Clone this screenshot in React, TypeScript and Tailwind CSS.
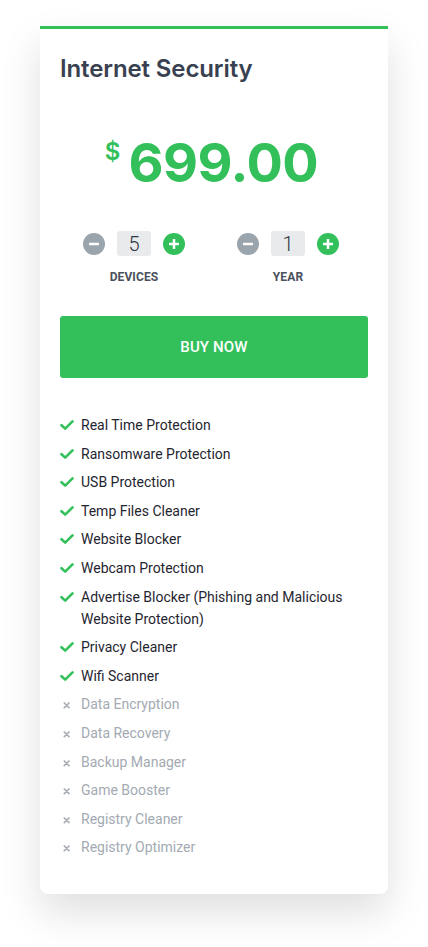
import { useState } from 'react';

const GREEN = 'bg-[#33c05b]';

const included = [
  'Real Time Protection',
  'Ransomware Protection',
  'USB Protection',
  'Temp Files Cleaner',
  'Website Blocker',
  'Webcam Protection',
  'Advertise Blocker (Phishing and Malicious Website Protection)',
  'Privacy Cleaner',
  'Wifi Scanner',
];

const excluded = [
  'Data Encryption',
  'Data Recovery',
  'Backup Manager',
  'Game Booster',
  'Registry Cleaner',
  'Registry Optimizer',
];

const CircleBtn = ({ kind, onClick }: { kind: 'minus' | 'plus'; onClick: () => void }) => (
  <button
    onClick={onClick}
    className={`w-[22px] h-[22px] rounded-full grid place-items-center ${kind === 'plus' ? GREEN : 'bg-[#9aa4ad]'}`}
  >
    <svg width="14" height="14" viewBox="0 0 14 14">
      <rect x="2" y="5.75" width="10" height="2.5" rx="0.5" fill="white" />
      {kind === 'plus' && <rect x="5.75" y="2" width="2.5" height="10" rx="0.5" fill="white" />}
    </svg>
  </button>
);

const Stepper = ({ label, value, setValue }: { label: string; value: number; setValue: (n: number) => void }) => (
  <div className="flex flex-col items-center">
    <div className="flex items-center gap-3">
      <CircleBtn kind="minus" onClick={() => setValue(Math.max(1, value - 1))} />
      <div className="w-[34px] h-[25px] rounded-[3px] bg-[#e9eaec] flex items-center justify-center text-[20px] font-light text-[#2f3540] font-['Roboto',sans-serif]">
        {value}
      </div>
      <CircleBtn kind="plus" onClick={() => setValue(value + 1)} />
    </div>
    <div className="mt-[12px] text-[12px] font-bold text-[#4a515c] tracking-[0.01em]">{label}</div>
  </div>
);

const Check = () => (
  <svg width="14" height="14" viewBox="0 0 14 14" className="shrink-0 mt-[4px]">
    <path d="M1.5 7.2 L5.2 10.6 L12.5 3.4" fill="none" stroke="#33c05b" strokeWidth="2.6" strokeLinecap="round" strokeLinejoin="round" />
  </svg>
);

const Cross = () => (
  <svg width="14" height="14" viewBox="0 0 14 14" className="shrink-0 mt-[5px]">
    <path d="M4.3 5 L9 9.7 M9 5 L4.3 9.7" stroke="#a7adb3" strokeWidth="1.7" strokeLinecap="round" />
  </svg>
);

export default function App() {
  const [devices, setDevices] = useState(5);
  const [years, setYears] = useState(1);

  return (
    <div className="min-h-screen bg-white pt-[26px] px-[40px] font-['Roboto',sans-serif]">
      <div className="w-[348px] bg-white border-t-[3px] border-[#33c05b] rounded-b-[8px] shadow-[0_18px_40px_rgba(0,0,0,0.13)] px-[20px] pt-[24px] pb-[36px]">
        <h2 className="font-['Inter',sans-serif] text-[24px] leading-[32px] font-semibold text-[#394150] tracking-[-0.005em]">
          Internet Security
        </h2>

        <div className="mt-[50px] pr-[5px] flex justify-center items-start text-[#33c05b] font-['Inter',sans-serif] font-bold">
          <span className="text-[24px] leading-none mt-[5px] mr-[8px] font-semibold">$</span>
          <span className="text-[54px] leading-[56px] tracking-[-0.01em]">699.00</span>
        </div>

        <div className="mt-[40px] -ml-[3px] mr-[3px] grid grid-cols-2">
          <Stepper label="DEVICES" value={devices} setValue={setDevices} />
          <Stepper label="YEAR" value={years} setValue={setYears} />
        </div>

        <button className={`mt-[30px] w-full h-[62px] rounded-[3px] ${GREEN} text-white text-[15px] font-medium tracking-[0.01em]`}>
          BUY NOW
        </button>

        <ul className="mt-[36px] flex flex-col gap-[6.6px] text-[14px] leading-[22px]">
          {included.map((f) => (
            <li key={f} className="flex gap-[7px] text-[#1f2630]">
              <Check />
              <span>{f}</span>
            </li>
          ))}
          {excluded.map((f) => (
            <li key={f} className="flex gap-[7px] text-[#a3aab2]">
              <Cross />
              <span>{f}</span>
            </li>
          ))}
        </ul>
      </div>
    </div>
  );
}
